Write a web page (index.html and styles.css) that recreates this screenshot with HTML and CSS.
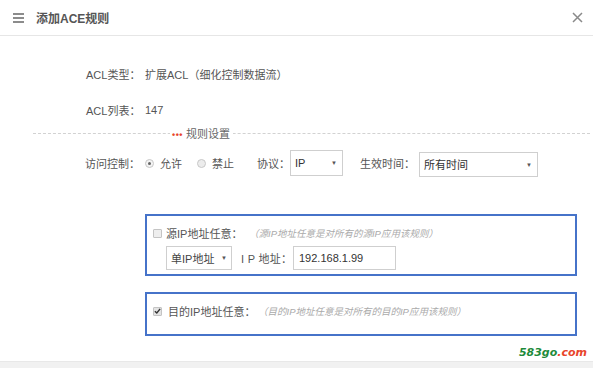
FILE: index.html
```html
<!DOCTYPE html>
<html lang="zh">
<head>
<meta charset="utf-8">
<link rel="stylesheet" href="styles.css">
</head>
<body>
<div class="dialog">
  <div class="header">
    <span class="menu"><i></i><i></i><i></i></span>
    <span class="title">添加ACE规则</span>
    <span class="close">
      <svg width="11" height="11" viewBox="0 0 11 11"><path d="M1 1L10 10M10 1L1 10" stroke="#8a8a8a" stroke-width="1.5" fill="none"/></svg>
    </span>
  </div>
  <div class="content">
    <div class="info row1"><span class="lbl">ACL类型：</span><span class="val">扩展ACL（细化控制数据流）</span></div>
    <div class="info row2"><span class="lbl">ACL列表：</span><span class="val">147</span></div>
    <div class="divider"><span class="dlabel"><span class="dots">•••</span> 规则设置</span></div>
    <div class="controls">
      <span class="lbl">访问控制：</span>
      <span class="radio checked"></span><span class="rtext">允许</span>
      <span class="radio"></span><span class="rtext r2">禁止</span>
      <span class="clabel proto">协议：</span>
      <span class="select sel-ip">IP<span class="arrow">▼</span></span>
      <span class="clabel time">生效时间：</span>
      <span class="select sel-time">所有时间<span class="arrow">▼</span></span>
    </div>
    <div class="box box-src">
      <div class="line">
        <span class="check"></span>
        <span class="ctext">源IP地址任意：</span>
        <span class="hint">（源IP地址任意是对所有的源IP应用该规则）</span>
      </div>
      <div class="line2">
        <span class="select sel-type">单IP地址<span class="arrow">▼</span></span>
        <span class="iplabel">I P 地址：</span>
        <span class="input">192.168.1.99</span>
      </div>
    </div>
    <div class="box box-dst">
      <div class="line">
        <span class="check on"><svg width="8" height="8" viewBox="0 0 8 8"><path d="M1 4.2L3.2 6.3L7 1.5" stroke="#333" stroke-width="1.6" fill="none"/></svg></span>
        <span class="ctext">目的IP地址任意：</span>
        <span class="hint">（目的IP地址任意是对所有的目的IP应用该规则）</span>
      </div>
    </div>
    <div class="watermark"><span class="g">583go</span><span class="r">.com</span></div>
  </div>
  <div class="footer"></div>
</div>
</body>
</html>
```

FILE: styles.css
```css
html, body { margin: 0; padding: 0; background: #fff; }
body {
  font-family: "Liberation Sans", "Noto Sans CJK SC", sans-serif;
  font-size: 11px;
  color: #555;
}
span { white-space: nowrap; flex-shrink: 0; }
.dialog { width: 593px; height: 368px; display: flex; flex-direction: column; overflow: hidden; }
.header {
  height: 35px;
  border-bottom: 1px solid #e6e6e6;
  display: flex;
  align-items: center;
  padding: 0 6px 0 13px;
}
.menu { display: flex; flex-direction: column; gap: 2px; width: 11px; margin-right: 12px; }
.menu i { display: block; height: 2px; background: #8c8c8c; }
.title { font-weight: bold; font-size: 12px; color: #555; flex: 1; }
.close { display: flex; width: 14px; height: 14px; align-items: center; justify-content: center; margin-right: 3px; }
.content { flex: 1; position: relative; }
.info { display: flex; height: 20px; align-items: center; padding-left: 86px; }
.info .lbl { width: 59px; }
.row1 { margin-top: 28px; }
.row2 { margin-top: 16px; }
.divider {
  margin: 5px 3px 0 33px;
  height: 16px;
  position: relative;
  display: flex;
  align-items: center;
}
.divider::before {
  content: "";
  position: absolute;
  left: 0; right: 0; top: 8px;
  border-top: 1px dashed #d2d2d2;
}
.dlabel { position: relative; background: #fff; margin-left: 137px; padding: 0 3px 0 2px; color: #666; }
.dots { color: #e8452b; font-size: 9px; font-weight: bold; letter-spacing: 0.5px; }
.controls { display: flex; align-items: center; height: 26px; margin-top: 9px; padding-left: 85px; }
.controls .lbl { width: 60px; }
.radio {
  width: 9px; height: 9px; border-radius: 50%;
  border: 1px solid #c8c8c8; background: #ececec;
  box-sizing: border-box; position: relative;
}
.radio.checked { background: #f4f4f4; }
.radio.checked::after {
  content: ""; position: absolute; left: 2px; top: 2px; width: 3px; height: 3px; border-radius: 50%; background: #666;
}
.rtext { margin-left: 6px; width: 37px; }
.rtext.r2 { width: 45px; }
.clabel.proto { width: 33px; }
.select {
  height: 26px; box-sizing: border-box; border: 1px solid #cfcfcf; background: #fff;
  display: flex; align-items: center; padding-left: 4px; position: relative; color: #333;
}
.arrow { position: absolute; right: 5px; font-size: 6px; color: #555; top: 9px; }
.sel-ip { width: 53px; }
.clabel.time { margin-left: 17px; width: 59px; }
.sel-time { width: 119px; height: 25px; margin-top: 2px; }
.box {
  margin-left: 145px; width: 432px; box-sizing: border-box;
  border: 2px solid #4673c9;
}
.box-src { margin-top: 38px; height: 62px; }
.box-dst { margin-top: 16px; height: 44px; }
.line { display: flex; align-items: center; height: 16px; margin-top: 9px; padding-left: 6px; }
.check {
  width: 9px; height: 9px; box-sizing: border-box; border: 1px solid #c4c4c4; background: #eee;
  display: flex; align-items: center; justify-content: center; border-radius: 1px;
}
.check.on { background: #e4e4e4; }
.ctext { margin-left: 4px; color: #555; width: 83px; }
.box-dst .ctext { margin-left: 6px; width: 90px; }
.hint { font-style: italic; color: #aaa; font-size: 9.5px; }
.line2 { display: flex; align-items: center; margin-top: 5px; padding-left: 19px; height: 24px; }
.sel-type { width: 66px; height: 24px; padding-left: 4px; color: #444; }
.sel-type .arrow { top: 8px; right: 4px; }
.iplabel { margin-left: 9px; width: 52px; color: #555; letter-spacing: 0.3px; }
.input {
  width: 103px; height: 24px; box-sizing: border-box; border: 1px solid #cfcfcf;
  display: flex; align-items: center; padding-left: 5px; color: #333;
}
.watermark {
  position: absolute; right: 6px; bottom: 2px;
  font-family: "DejaVu Sans", sans-serif; font-style: italic; font-weight: bold; font-size: 11px;
}
.watermark .g { color: #1d8a3a; }
.watermark .r { color: #e8452b; }
.footer { height: 6px; background: #f1f1f1; border-top: 1px solid #e8e8e8; }
```
